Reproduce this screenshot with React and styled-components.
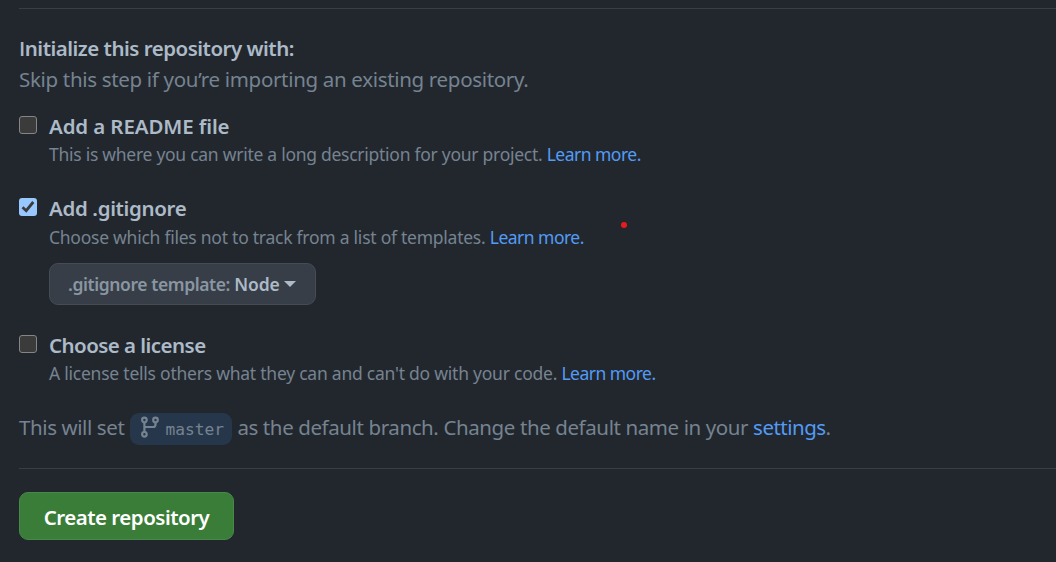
import React from "react";
import styled, { createGlobalStyle } from "styled-components";

const GlobalStyle = createGlobalStyle`
  * { box-sizing: border-box; }
  body {
    margin: 0;
    height: 562px;
    overflow: hidden;
    background: #22272e;
    color: #adbac7;
    font-family: "Noto Sans", "Open Sans", sans-serif;
  }
`;

const Page = styled.main`
  position: relative;
  height: 562px;
  padding: 8px 0 0 19px;
`;

const Divider = styled.hr`
  height: 1px;
  margin: ${(p) => p.$top || 0}px 0 0;
  border: 0;
  background: #373e47;
`;

const Header = styled.header`
  padding-top: 24px;
`;

const Heading = styled.h2`
  margin: 0;
  font-size: 20.5px;
  font-weight: 600;
  line-height: 31px;
  white-space: nowrap;
  letter-spacing: ${(p) => p.$track || 0}px;
`;

const PlainCapital = styled.span`
  font-family: "Open Sans", sans-serif;
`;

const Lead = styled.p`
  margin: 0;
  color: #768390;
  font-size: 20.5px;
  line-height: 31px;
  white-space: nowrap;
  letter-spacing: ${(p) => p.$track || 0}px;
`;

const Option = styled.section`
  display: flex;
  align-items: flex-start;
  gap: 12px;
  margin-top: ${(p) => p.$top}px;
`;

const Box = styled.span`
  display: flex;
  flex: none;
  width: 18px;
  height: 18px;
  margin-top: 5px;
  border: ${(p) => (p.$checked ? "0" : "1.5px solid #858585")};
  border-radius: 3px;
  background: ${(p) => (p.$checked ? "#99c8ff" : "#3b3b3b")};
`;

const Label = styled(Heading).attrs({ as: "label" })`
  display: block;
  line-height: 30px;
  margin-bottom: ${(p) => p.$gap || 0}px;
`;

const Description = styled.p`
  margin: 0;
  color: #768390;
  font-size: 17.5px;
  line-height: 27px;
  white-space: nowrap;
  letter-spacing: ${(p) => p.$track || 0}px;
`;

const Link = styled.a`
  color: #539bf5;
  letter-spacing: -0.52px;
`;

const TemplateButton = styled.button`
  display: flex;
  align-items: center;
  width: 267px;
  height: 42px;
  margin-top: 12px;
  padding: 0 0 0 18px;
  border: 1px solid #444c56;
  border-radius: 9px;
  background: #373e47;
  color: #adbac7;
  font: 600 17.5px/30px "Noto Sans", sans-serif;
  white-space: pre;
  letter-spacing: -0.1px;
`;

const Muted = styled.span`
  color: #8a96a2;
  letter-spacing: -0.41px;
`;

const Caret = styled.span`
  margin-left: 4px;
  border: 6px solid transparent;
  border-top-color: #adbac7;
  border-bottom: 0;
`;

const BranchLine = styled.div`
  display: flex;
  align-items: center;
  height: 32px;
  margin-top: 26px;
  color: #768390;
  font-size: 20.5px;
  line-height: 30px;
  white-space: nowrap;
`;

const Phrase = styled.span`
  margin-top: -4px;
  letter-spacing: ${(p) => p.$track || 0}px;
`;

const Branch = styled.span`
  display: flex;
  width: 102px;
  height: 32px;
  margin: 0 5px 0 6px;
  padding: 3px 0 0 10px;
  border-radius: 9px;
  background: #27374b;
`;

const BranchName = styled.code`
  margin-left: 6px;
  font: 16.2px/27px "DejaVu Sans Mono", monospace;
`;

const Actions = styled.div`
  margin-top: 23px;
`;

const Submit = styled.button`
  width: 215px;
  height: 48px;
  padding: 2px 0 0;
  border: 1px solid #46894a;
  border-radius: 9px;
  background: #3a7d38;
  color: #fff;
  font: 600 20.5px/30px "Noto Sans", sans-serif;
  letter-spacing: -0.5px;
`;

const Pointer = styled.i`
  position: absolute;
  left: 621px;
  top: 222px;
  width: 6px;
  height: 6px;
  border-radius: 50%;
  background: #e91b1b;
`;

function Checkbox({ checked }) {
  return (
    <Box $checked={checked} role="checkbox" aria-checked={!!checked}>
      {checked && (
        <svg width="18" height="18" viewBox="0 0 18 18" fill="none">
          <path d="M3.5 9.3 7.2 12.7 14.3 4" stroke="#3b3b3b" strokeWidth="2.8" />
        </svg>
      )}
    </Box>
  );
}

function BranchIcon() {
  return (
    <svg width="19" height="22" viewBox="0 0 19 22" fill="none" stroke="#768390" strokeWidth="2.2">
      <circle cx="4.4" cy="4" r="2.3" />
      <circle cx="15.5" cy="4" r="2.3" />
      <circle cx="4.4" cy="18.3" r="2.3" />
      <path d="M4.4 6.3V16M15.5 6.3V8.4Q15.5 11 12.9 11H4.4" />
    </svg>
  );
}

export default function App() {
  return (
    <>
      <GlobalStyle />
      <Page>
        <Divider />
        <Header>
          <Heading $track={-0.5}>
            <PlainCapital>I</PlainCapital>nitialize this repository with:
          </Heading>
          <Lead $track={-0.32}>Skip this step if you’re importing an existing repository.</Lead>
        </Header>
        <Option $top={16}>
          <Checkbox />
          <div>
            <Label $track={-0.12}>Add a README file</Label>
            <Description $track={-0.27}>
              This is where you can write a long description for your project. <Link>Learn more.</Link>
            </Description>
          </div>
        </Option>
        <Option $top={25}>
          <Checkbox checked />
          <div>
            <Label $gap={1} $track={-0.35}>Add .gitignore</Label>
            <Description $track={-0.25}>
              Choose which files not to track from a list of templates. <Link>Learn more.</Link>
            </Description>
            <TemplateButton>
              <Muted>.gitignore template: </Muted>
              <span>Node</span>
              <Caret />
            </TemplateButton>
          </div>
        </Option>
        <Option $top={25}>
          <Checkbox />
          <div>
            <Label $track={-0.54}>Choose a license</Label>
            <Description $track={-0.235}>
              A license tells others what they can and can't do with your code. <Link>Learn more.</Link>
            </Description>
          </div>
        </Option>
        <BranchLine>
          <Phrase $track={-0.4}>This will set</Phrase>
          <Branch>
            <BranchIcon />
            <BranchName>master</BranchName>
          </Branch>
          <Phrase $track={-0.4}>
            as the default branch. Change the default name in your <Link>settings</Link>.
          </Phrase>
        </BranchLine>
        <Divider $top={23} />
        <Actions>
          <Submit>Create repository</Submit>
        </Actions>
        <Pointer />
      </Page>
    </>
  );
}
